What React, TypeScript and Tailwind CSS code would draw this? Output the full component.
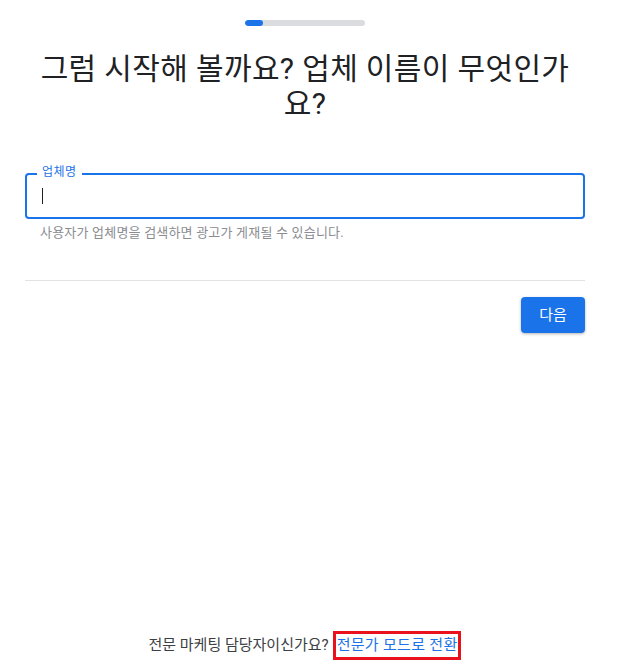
import React from "react";

export default function App() {
  return (
    <div
      className="w-[610px] min-h-screen flex flex-col bg-white text-[#202124]"
      style={{ fontFamily: 'Roboto, "Noto Sans CJK KR", sans-serif' }}
    >
      <div className="flex justify-center pt-[20px]">
        <div className="w-[120px] h-[6px] rounded-full bg-[#dadce0] overflow-hidden">
          <div className="w-[18px] h-full rounded-full bg-[#1a73e8]" />
        </div>
      </div>
      <div className="px-[25px]">
        <h1 className="mt-[25px] text-center text-[30px] leading-[35px] tracking-[0.35px] font-normal text-[#202124]">
          그럼 시작해 볼까요? 업체 이름이 무엇인가요?
        </h1>
        <div className="mt-[52px] relative">
          <div className="h-[46px] border-2 border-[#1a73e8] rounded-[4px] flex items-center px-[15px]">
            <div className="w-[1px] h-[16px] bg-[#202124]" />
          </div>
          <span className="absolute left-[12px] top-[-9px] bg-white px-[5px] text-[12px] leading-[16px] tracking-[0.5px] text-[#1a73e8]">
            업체명
          </span>
        </div>
        <p className="mt-[6px] pl-[15px] text-[13px] leading-[16px] tracking-[0.2px] text-[#8a8d91]">
          사용자가 업체명을 검색하면 광고가 게재될 수 있습니다.
        </p>
        <div className="mt-[39px] h-px bg-[#e3e3e3]" />
        <div className="flex justify-end mt-[16px]">
          <button className="h-[36px] w-[64px] rounded-[4px] bg-[#1a73e8] text-white text-[15px] shadow-[0_1px_3px_rgba(0,0,0,0.3)]">
            다음
          </button>
        </div>
      </div>
      <div className="flex-1" />
      <div className="flex justify-center items-center pb-[5px] text-[15px] text-[#3c4043]">
        <span>전문 마케팅 담당자이신가요?</span>
        <span className="ml-[4px] border-[3px] border-[#e8111c] px-[1px] py-[2px] leading-[19px] tracking-[0.3px] text-[#1a73e8]">
          전문가 모드로 전환
        </span>
      </div>
    </div>
  );
}
